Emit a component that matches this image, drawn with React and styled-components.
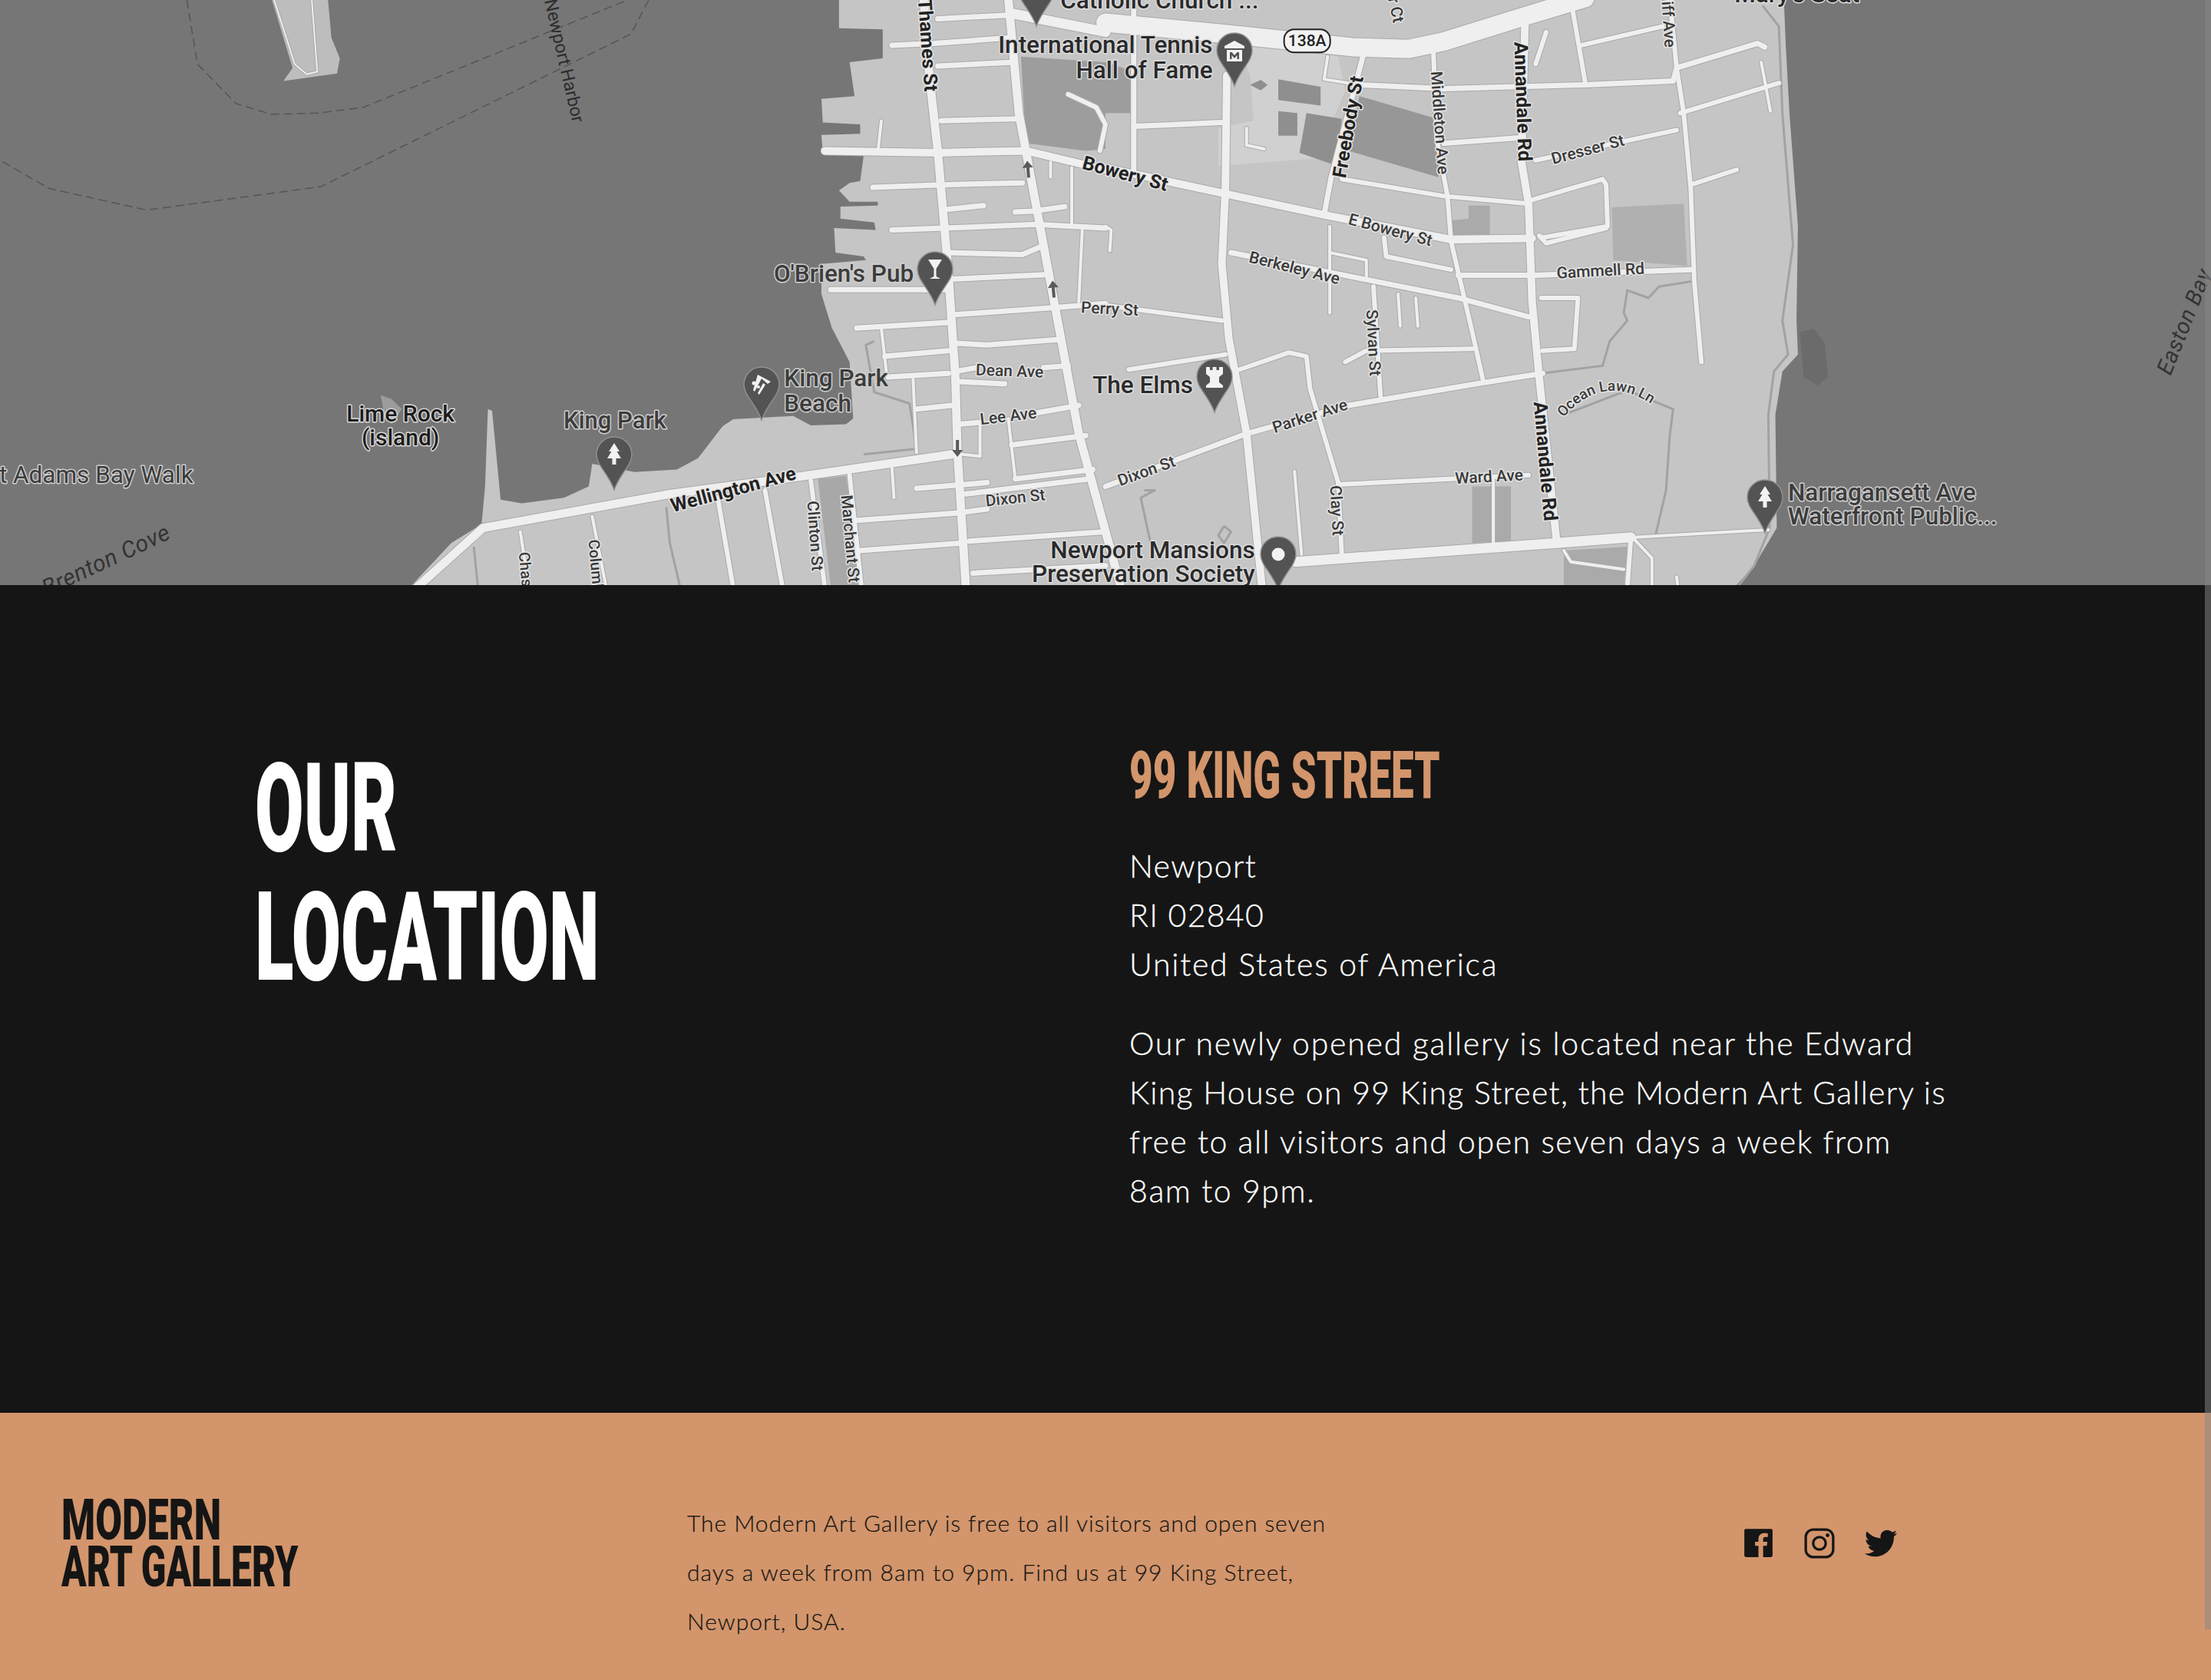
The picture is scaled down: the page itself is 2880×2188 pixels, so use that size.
import React from "react";
import styled, { createGlobalStyle } from "styled-components";
import { IoLogoFacebook, IoLogoInstagram, IoLogoTwitter } from "react-icons/io";

const INK = "#151515";
const TAN = "#d3956b";
const S = 2880 / 1568;

const Global = createGlobalStyle`
  html, body { margin: 0; padding: 0; background: ${INK}; }
  * { box-sizing: border-box; }
`;

const Page = styled.div`
  position: relative;
  width: 2880px;
  height: 2188px;
  overflow: hidden;
  font-family: "Lato", "Liberation Sans", sans-serif;
`;
const ScrollThumb = styled.div`
  position: absolute;
  top: 0;
  right: 0;
  width: 8px;
  height: 2122px;
  background: rgba(135, 135, 135, 0.51);
`;

/* ---------- map ---------- */
const MapFrame = styled.section`
  height: 762px;
  background: #767676;
  overflow: hidden;
`;
const MapSvg = styled.svg`
  display: block;
  width: 2880px;
  height: 762px;
`;
const Casing = styled.polyline`
  fill: none;
  stroke: #a9a9a9;
  stroke-linejoin: round;
  stroke-linecap: round;
  stroke-width: ${(p) => p.$w + 2}px;
  vector-effect: non-scaling-stroke;
`;
const Road = styled.polyline`
  fill: none;
  stroke: #efefef;
  stroke-linejoin: round;
  stroke-linecap: round;
  stroke-width: ${(p) => p.$w}px;
  vector-effect: non-scaling-stroke;
`;
const Stream = styled.polyline`
  fill: none;
  stroke: #a2a2a2;
  stroke-width: 3px;
  stroke-linejoin: round;
  vector-effect: non-scaling-stroke;
`;
const Dashed = styled.polyline`
  fill: none;
  stroke: #555;
  stroke-width: 1.5px;
  stroke-dasharray: 11 6;
  vector-effect: non-scaling-stroke;
`;
const Area = styled.polygon`
  fill: ${(p) => p.$fill};
`;
const MapLabel = styled.text`
  font-family: "Roboto", "Liberation Sans", sans-serif;
  font-size: ${(p) => p.$size}px;
  font-weight: ${(p) => p.$weight};
  font-style: ${(p) => (p.$italic ? "italic" : "normal")};
  letter-spacing: ${(p) => p.$track || 0}px;
  fill: ${(p) => p.$fill};
  stroke: ${(p) => p.$halo};
  stroke-width: 3px;
  paint-order: stroke;
  stroke-linejoin: round;
`;
const PinShape = styled.path`
  fill: #535353;
  stroke: #909090;
  stroke-width: 1.5px;
`;
const PinGlyph = styled.g`
  fill: #f2f2f2;
  stroke: none;
`;

const land =
  "1190,-5 1190,75 1252,78 1252,155 1205,165 1212,255 1165,262 1167,325 1220,330 1220,355 1165,358 1167,405 1225,412 1220,480 1205,485 1190,505 1205,535 1245,535 1245,545 1192,548 1192,580 1240,590 1242,610 1183,605 1185,670 1225,680 1228,690 1165,700 1165,780 1180,870 1205,960 1210,1110 1200,1125 1150,1128 1125,1103 1040,1112 1025,1130 990,1215 960,1245 900,1252 840,1230 835,1290 800,1320 740,1335 710,1325 698,1090 692,1085 688,1290 683,1390 640,1440 580,1560 2459,1560 2488,1500 2520,1400 2518,1100 2528,985 2550,940 2548,850 2550,600 2538,300 2533,130 2530,-5";

const blocksA = [
  ["#9d9d9d", "1448,150 1568,165 1608,190 1608,300 1568,300 1568,395 1540,400 1455,380"],
  ["#a8a8a8", "1160,1270 1200,1262 1222,1552 1178,1552"],
];
const blocksB = [
  ["#d0d0d0", "185,100 230,110 330,150 340,240 300,420 160,440 160,340 210,320 205,200"],
  ["#8f8f8f", "245,210 305,230 305,280 245,265"],
  ["#8f8f8f", "245,295 272,300 272,360 245,360"],
  ["#8f8f8f", "285,300 335,315 328,440 275,405"],
  ["#979797", "360,255 470,315 472,470 345,400"],
  ["#8f8f8f", "205,225 220,212 230,225 220,240"],
  ["#b0b0b0", "718,550 820,540 825,705 720,690"],
  ["#aaaaaa", "490,630 545,625 545,545 515,545 515,580 490,585"],
  ["#aaaaaa", "520,1290 575,1290 575,1435 520,1440"],
  ["#aaaaaa", "650,1460 740,1450 735,1560 650,1560"],
  ["#6b6b6b", "985,880 1005,872 1020,910 1025,1000 1010,1022 990,1000"],
];

const roadsA = [
  [14, "1310,-5 1318,200 1330,400 1345,720 1355,1000 1358,1200 1370,1560"],
  [14, "1430,-5 1445,300 1455,400 1480,650 1530,1150 1590,1560"],
  [13, "1170,400 1330,405 1455,400 1568,450"],
  [16, "1436,36 1568,85"],
  [9, "1265,120 1325,115 1435,100"],
  [9, "1330,175 1440,165"],
  [9, "1330,50 1430,40"],
  [9, "1335,320 1445,315"],
  [9, "1238,497 1335,490 1450,485"],
  [9, "1345,555 1395,545"],
  [9, "1440,562 1465,560 1510,548"],
  [9, "1265,610 1340,605 1470,595 1568,605"],
  [9, "1345,670 1450,675 1475,655"],
  [9, "1350,740 1490,728"],
  [9, "1178,768 1340,768"],
  [9, "1350,835 1500,815 1568,805"],
  [9, "1215,870 1345,855"],
  [9, "1355,910 1400,915 1505,900"],
  [9, "1255,945 1345,930"],
  [9, "1355,985 1385,975"],
  [9, "1480,975 1515,970"],
  [9, "1260,1000 1345,990"],
  [9, "1360,1012 1425,1018"],
  [9, "1300,1085 1350,1075"],
  [9, "1360,1125 1390,1120"],
  [9, "1470,1095 1530,1075"],
  [9, "1435,1180 1540,1155"],
  [9, "1440,1270 1550,1245"],
  [9, "1370,1310 1545,1270"],
  [9, "1215,1380 1360,1360 1400,1350"],
  [9, "1220,1460 1365,1440"],
  [9, "1375,1435 1568,1410"],
  [9, "1380,1520 1568,1500"],
  [9, "1300,1295 1400,1280"],
  [5, "1265,1240 1268,1320"],
  [5, "1365,1205 1390,1210 1390,1120"],
  [14, "590,1560 685,1400 950,1310 1130,1265 1350,1205"],
  [7, "1150,1275 1170,1560"],
  [7, "1205,1260 1222,1560"],
  [5, "840,1370 860,1560"],
  [5, "738,1410 750,1560"],
  [7, "1018,1320 1040,1560"],
  [7, "1085,1300 1110,1560"],
  [5, "1250,320 1245,405"],
  [5, "1430,1110 1440,1270"],
  [5, "1490,430 1490,470"],
  [5, "1520,445 1520,600"],
  [5, "1535,610 1530,800"],
  [7, "1515,250 1555,285 1568,330 1560,400"],
  [5, "1250,870 1258,1000"],
  [5, "1295,1005 1300,1200"],
];
const streamsA = [
  "1240,905 1228,915 1240,1040 1290,1070 1300,1190 1225,1205",
  "945,1345 950,1440 965,1560",
  "672,1450 678,1560",
];
const roadsB = [
  [24, "0,60 170,90 350,125 430,130 480,110 600,40 680,-5"],
  [13, "172,200 170,500 165,700 175,900 200,1150 222,1560"],
  [13, "0,445 160,510 310,570 490,635 605,632"],
  [10, "40,0 40,450"],
  [9, "40,335 165,325"],
  [9, "365,150 320,470 310,570"],
  [5, "315,150 310,210 360,225"],
  [9, "360,225 480,235 680,225 805,215 810,180 925,115 935,125"],
  [7, "465,140 470,370 485,520 490,640 520,880 535,1005"],
  [13, "595,50 590,430 600,540 605,800 615,1000 640,1440"],
  [7, "660,0 680,215"],
  [7, "675,120 790,70"],
  [7, "625,85 610,170"],
  [7, "800,-5 810,180 820,300 830,500 835,745 845,960"],
  [7, "815,300 955,220"],
  [6, "930,165 943,295"],
  [9, "480,380 590,365"],
  [7, "610,425 810,345"],
  [7, "830,490 895,450"],
  [7, "335,475 480,520 600,540"],
  [7, "605,530 705,475 710,490 712,600 620,630 615,625 625,645 710,605"],
  [7, "490,640 600,635"],
  [7, "395,630 398,680 490,715"],
  [9, "500,730 610,730 830,715"],
  [9, "178,670 500,790 600,840"],
  [5, "318,600 318,830"],
  [5, "318,670 370,690 370,740"],
  [7, "380,760 390,1050"],
  [5, "415,780 418,865"],
  [5, "440,790 443,865"],
  [7, "340,960 370,930 520,925"],
  [7, "618,790 670,790 665,925 620,930"],
  [10, "0,1290 200,1150 345,1075 535,1015 620,990"],
  [7, "190,980 260,935 285,945 290,1030 330,1280 335,1470"],
  [7, "330,1285 600,1260"],
  [7, "33,980 170,940"],
  [7, "0,810 165,850"],
  [5, "0,600 8,610 6,665"],
  [6, "200,340 200,385 225,395"],
  [16, "270,1490 640,1440 745,1425"],
  [6, "750,1425 940,1405"],
  [8, "745,1430 740,1560"],
  [6, "750,1430 775,1480 775,1560"],
  [6, "650,1460 660,1490 735,1510"],
  [5, "268,1250 278,1470"],
  [4, "550,1270 550,1440"],
  [4, "810,1530 812,1560"],
];
const streamsB = [
  "835,745 785,760 770,790 740,770 735,830 740,850 715,905 705,970 620,990",
  "650,1100 740,1035 805,1085 800,1160 795,1300 780,1420",
  "932,15 955,70 960,300 975,650 960,850 968,940 948,985 940,1100 942,1400 920,1500 895,1560",
  "55,1300 70,1300 50,1320 65,1450",
  "168,1395 178,1410 168,1440 160,1420 168,1395",
];

const roadWidth = (w) => (w >= 20 ? w : w >= 12 ? w - 3 : w >= 9 ? 7 : w >= 7 ? 6 : w >= 5 ? 4 : w);

const L = ({ t, x, y, a = 0, s = 21, anchor = "middle", w = 500, fill = "#3a3a3a", halo = "#e6e6e6", italic, track }) => (
  <MapLabel
    transform={`translate(${x * S} ${y * S}) rotate(${a})`}
    textAnchor={anchor}
    dominantBaseline="central"
    $size={s}
    $weight={w}
    $fill={fill}
    $halo={halo}
    $italic={italic}
    $track={track}
  >
    {t}
  </MapLabel>
);

const poi = { s: 31.5, w: 500, fill: "#3c3c3c", halo: "#cfcfcf" };
const poiDark = { s: 31.5, w: 500, fill: "#2a2a2a", halo: "#dedede" };

const labels = [
  { t: "Newport Harbor", x: 400, y: 43, a: 77, s: 23, w: 400, fill: "#2c2c2c", halo: "transparent" },
  { t: "Thames St", x: 658, y: 32, a: 86, s: 25, w: 700, fill: "#222" },
  { t: "Middleton Ave", x: 1021, y: 87, a: 86, s: 21 },
  { t: "Annandale Rd", x: 1080, y: 72, a: 88, s: 25, w: 700, fill: "#222" },
  { t: "Annandale Rd", x: 1096, y: 327, a: 85, s: 25, w: 700, fill: "#222" },
  { t: "Freebody St", x: 956, y: 90, a: -80, s: 25, w: 700, fill: "#222" },
  { t: "Bowery St", x: 798, y: 123, a: 15, s: 25, w: 700, fill: "#222" },
  { t: "E Bowery St", x: 986, y: 163, a: 15, s: 21 },
  { t: "Berkeley Ave", x: 918, y: 190, a: 14, s: 21 },
  { t: "Dresser St", x: 1126, y: 106, a: -15, s: 21 },
  { t: "Gammell Rd", x: 1135, y: 192, a: -3, s: 21 },
  { t: "Perry St", x: 787, y: 219, a: 3, s: 21 },
  { t: "Sylvan St", x: 974, y: 243, a: 87, s: 21 },
  { t: "Dean Ave", x: 716, y: 263, a: 2, s: 21 },
  { t: "Lee Ave", x: 715, y: 295, a: -7, s: 21 },
  { t: "Dixon St", x: 720, y: 353, a: -6, s: 21 },
  { t: "Dixon St", x: 813, y: 334, a: -20, s: 21 },
  { t: "Parker Ave", x: 929, y: 295, a: -18, s: 21 },
  { t: "Ward Ave", x: 1056, y: 338, a: -3, s: 21 },
  { t: "Clay St", x: 948, y: 362, a: 87, s: 21 },
  { t: "Wellington Ave", x: 520, y: 347, a: -15, s: 25, w: 700, fill: "#222" },
  { t: "Clinton St", x: 578, y: 380, a: 86, s: 21 },
  { t: "Marchant St", x: 603, y: 382, a: 85, s: 21 },
  { t: "Columbia Ave", x: 424, y: 416, a: 85, s: 20 },
  { t: "Chase Ave", x: 374, y: 417, a: 85, s: 20 },
  { t: "r Ct", x: 990, y: 7, a: 78, s: 21 },
  { t: "Cliff Ave", x: 1183, y: 12, a: 86, s: 21 },
  { t: "Easton Bay", x: 1549, y: 228, a: -68, s: 29, w: 400, italic: true, fill: "#333", halo: "transparent", track: 0.6 },
  { t: "Brenton Cove", x: 75, y: 397, a: -25, s: 30, w: 400, italic: true, fill: "#333", halo: "transparent", track: 0.6 },
  { t: "Fort Adams Bay Walk", x: 137, y: 337, anchor: "end", ...poi, w: 400 },
  { t: "Lime Rock", x: 284, y: 293, s: 30, w: 500, fill: "#1c1c1c", halo: "#d8d8d8" },
  { t: "(island)", x: 284, y: 310, s: 30, w: 500, fill: "#1c1c1c", halo: "#d8d8d8" },
  { t: "King Park", x: 436, y: 298, ...poi, s: 31 },
  { t: "King Park", x: 556, y: 268, anchor: "start", ...poi },
  { t: "Beach", x: 556, y: 286, anchor: "start", ...poi },
  { t: "O'Brien's Pub", x: 648, y: 194, anchor: "end", ...poi },
  { t: "The Elms", x: 846, y: 273, anchor: "end", ...poiDark },
  { t: "International Tennis", x: 860, y: 32, anchor: "end", ...poiDark },
  { t: "Hall of Fame", x: 860, y: 50, anchor: "end", ...poiDark },
  { t: "Newport Mansions", x: 890, y: 390, anchor: "end", ...poiDark },
  { t: "Preservation Society", x: 890, y: 407, anchor: "end", ...poiDark },
  { t: "Narragansett Ave", x: 1268, y: 349, anchor: "start", ...poi },
  { t: "Waterfront Public...", x: 1268, y: 366, anchor: "start", ...poi },
  { t: "Catholic Church ...", x: 752, y: 0, anchor: "start", ...poiDark },
  { t: "Mary's Seat", x: 1230, y: -4, anchor: "start", ...poiDark },
];

const tree = (
  <path d="M0 -15 L7 -4 L3.5 -4 L9 5 L2.5 5 L2.5 13 L-2.5 13 L-2.5 5 L-9 5 L-3.5 -4 L-7 -4 Z" />
);
const Pin = ({ x, y, children }) => (
  <g transform={`translate(${x} ${y})`}>
    <PinShape d="M0 -23 C13 -23 23 -13 23 0 C23 14 8 24 0 46 C-8 24 -23 14 -23 0 C-23 -13 -13 -23 0 -23Z" />
    <PinGlyph>{children}</PinGlyph>
  </g>
);

const Arrow = ({ x, y, r }) => (
  <path
    transform={`translate(${x * S} ${y * S}) rotate(${r})`}
    d="M0 -11 L7 -2 L2 -2 L2 11 L-2 11 L-2 -2 L-7 -2 Z"
    fill="#5a5a5a"
  />
);

const TownMap = () => (
  <MapSvg viewBox="0 0 2880 762" xmlns="http://www.w3.org/2000/svg">
    <defs>
      <path id="ocean-lawn" d={`M${1108 * S} ${297 * S} Q${1136 * S} ${263 * S} ${1172 * S} ${287 * S}`} />
    </defs>
    <g transform="scale(0.9184 0.4911)">
      <Area $fill="#c5c5c5" points={land} />
      <Area $fill="#bdbdbd" points="385,-5 465,-5 470,100 482,155 478,195 402,215 415,180" />
      {blocksA.map(([f, p], i) => <Area key={i} $fill={f} points={p} />)}
      <g transform="translate(1568 0)">
        {blocksB.map(([f, p], i) => <Area key={i} $fill={f} points={p} />)}
      </g>
      <Dashed points="265,0 280,170 335,275 385,303 450,300 515,285 890,0" />
      <Dashed points="920,0 895,90 455,495 208,557 70,500 0,425" />
      <Area $fill="#9c9c9c" points="540,1048 555,1058 570,1085 555,1125 545,1100" />
      {streamsA.map((p, i) => <Stream key={i} points={p} />)}
      <g transform="translate(1568 0)">
        {streamsB.map((p, i) => <Stream key={i} points={p} />)}
      </g>
      <Casing $w={2} points="388,-5 418,170 435,197 450,190 442,-5" />
      <Road $w={2} points="388,-5 418,170 435,197 450,190 442,-5" />
      {roadsA.map(([w, p], i) => <Casing key={i} $w={roadWidth(w)} points={p} />)}
      <g transform="translate(1568 0)">
        {roadsB.map(([w, p], i) => <Casing key={i} $w={roadWidth(w)} points={p} />)}
      </g>
      {roadsA.map(([w, p], i) => <Road key={i} $w={roadWidth(w)} points={p} />)}
      <g transform="translate(1568 0)">
        {roadsB.map(([w, p], i) => <Road key={i} $w={roadWidth(w)} points={p} />)}
      </g>
    </g>

    <Arrow x={729} y={120} r={-5} />
    <Arrow x={747} y={205} r={-5} />
    <Arrow x={679} y={318} r={180} />

    {labels.map((l, i) => <L key={i} {...l} />)}

    <MapLabel $size={19} $weight={500} $fill="#3a3a3a" $halo="#e6e6e6">
      <textPath href="#ocean-lawn" startOffset="50%" textAnchor="middle">Ocean Lawn Ln</textPath>
    </MapLabel>

    <g transform={`translate(${927 * S} ${29 * S})`}>
      <rect x="-30" y="-15" width="60" height="30" rx="13" fill="#f2f2f2" stroke="#222" strokeWidth="2" />
      <MapLabel textAnchor="middle" dominantBaseline="central" $size={21} $weight={500} $fill="#222" $halo="transparent">138A</MapLabel>
    </g>

    <Pin x={1350} y={-12}><circle r="0" /></Pin>
    <Pin x={1218} y={351}>
      <path d="M-9 -13 L9 -13 L1.5 -1 L1.5 9 L7 12 L-7 12 L-1.5 9 L-1.5 -1 Z" />
    </Pin>
    <Pin x={992} y={501}>
      <path d="M-5 -13 L12 -4 L8 -1 L0 -8 L-9 9 L-11 7 Z" />
      <path d="M2 -2 L5 0 L-3 13 L-5 11 Z" />
      <circle cx="-10" cy="-2" r="2.5" />
      <circle cx="-4" cy="3" r="2" />
    </Pin>
    <Pin x={800} y={592}>{tree}</Pin>
    <Pin x={1608} y={66}>
      <path d="M0 -13 L13 -6 L13 -3 L-13 -3 L-13 -6 Z" />
      <path d="M-10 -1 L10 -1 L10 14 L-10 14 Z M-6 2 L-6 11 L-3.5 11 L-3.5 6 L0 10 L3.5 6 L3.5 11 L6 11 L6 2 L3.5 2 L0 6 L-3.5 2 Z" fillRule="evenodd" />
    </Pin>
    <Pin x={1582} y={491}>
      <path d="M-11 -13 L-6 -13 L-6 -9 L-2.5 -9 L-2.5 -13 L2.5 -13 L2.5 -9 L6 -9 L6 -13 L11 -13 L11 -4 L6 0 L6 7 L11 11 L11 14 L-11 14 L-11 11 L-6 7 L-6 0 L-11 -4 Z" />
    </Pin>
    <Pin x={1665} y={722}><circle r="8.5" /></Pin>
    <Pin x={2299} y={648}>{tree}</Pin>
  </MapSvg>
);

/* ---------- location ---------- */
const Location = styled.section`
  height: 1078px;
  background: ${INK};
  padding: 200px 0 0 332px;
  display: grid;
  grid-template-columns: 1139px 1100px;
  align-items: start;
  color: #fff;
`;
const Squeeze = styled.span`
  display: block;
  width: max-content;
  white-space: nowrap;
  transform-origin: left center;
  transform: scaleX(${(p) => p.$x});
`;
const Heading = styled.h2`
  margin: 7px 0 0;
  font-family: "Roboto", "Liberation Sans", sans-serif;
  font-size: 162px;
  line-height: 168px;
  font-weight: 900;
  color: #fff;
`;
const Address = styled.div`
  min-width: 0;
`;
const Street = styled.h3`
  margin: 0 0 38px;
  font-family: "Roboto", "Liberation Sans", sans-serif;
  font-size: 85px;
  line-height: 96px;
  font-weight: 900;
  color: ${TAN};
`;
const Lines = styled.p`
  margin: ${(p) => p.$top || 0}px 0 0;
  font-size: 41px;
  line-height: 64px;
  font-weight: 300;
  -webkit-text-stroke: 0.3px #fff;
  color: #fff;
`;
const Line = styled.span`
  display: block;
  white-space: nowrap;
  letter-spacing: ${(p) => p.$track}px;
`;

/* ---------- footer ---------- */
const Footer = styled.footer`
  height: 348px;
  background: ${TAN};
  color: ${INK};
  padding: 111px 0 0 80px;
  display: grid;
  grid-template-columns: 815px 1355px auto;
  align-items: start;
`;
const Logo = styled.div`
  margin-top: -2px;
  font-family: "Roboto", "Liberation Sans", sans-serif;
  font-size: 75px;
  line-height: 61px;
  font-weight: 900;
`;
const Blurb = styled.p`
  margin: 0;
  font-size: 30px;
  line-height: 64px;
  font-weight: 300;
  -webkit-text-stroke: 0.2px ${INK};
`;
const Socials = styled.div`
  display: flex;
  margin-top: 34px;
`;
const Social = styled.a`
  display: flex;
  width: 80px;
  height: 49px;
  align-items: center;
  justify-content: center;
  svg {
    display: block;
    flex: none;
    width: ${(p) => p.$size}px;
    height: ${(p) => p.$size}px;
    fill: ${INK};
  }
`;

export default function App() {
  return (
    <Page>
      <Global />
      <MapFrame>
        <TownMap />
      </MapFrame>
      <Location>
        <Heading>
          <Squeeze $x={0.569}>OUR</Squeeze>
          <Squeeze $x={0.576}>LOCATION</Squeeze>
        </Heading>
        <Address>
          <Street><Squeeze $x={0.622}>99 KING STREET</Squeeze></Street>
          <Lines>
            <Line $track={1.3}>Newport</Line>
            <Line $track={1.3}>RI 02840</Line>
            <Line $track={1.76}>United States of America</Line>
          </Lines>
          <Lines $top={39}>
            <Line $track={1.77}>Our newly opened gallery is located near the Edward</Line>
            <Line $track={1.3}>King House on 99 King Street, the Modern Art Gallery is</Line>
            <Line $track={1.55}>free to all visitors and open seven days a week from</Line>
            <Line $track={1.6}>8am to 9pm.</Line>
          </Lines>
        </Address>
      </Location>
      <Footer>
        <Logo>
          <Squeeze $x={0.672}>MODERN</Squeeze>
          <Squeeze $x={0.64}>ART GALLERY</Squeeze>
        </Logo>
        <Blurb>
          <Line $track={0.93}>The Modern Art Gallery is free to all visitors and open seven</Line>
          <Line $track={1.03}>days a week from 8am to 9pm. Find us at 99 King Street,</Line>
          <Line $track={1.0}>Newport, USA.</Line>
        </Blurb>
        <Socials>
          <Social $size={49}><IoLogoFacebook /></Social>
          <Social $size={52}><IoLogoInstagram /></Social>
          <Social $size={46}><IoLogoTwitter /></Social>
        </Socials>
      </Footer>
      <ScrollThumb />
    </Page>
  );
}
